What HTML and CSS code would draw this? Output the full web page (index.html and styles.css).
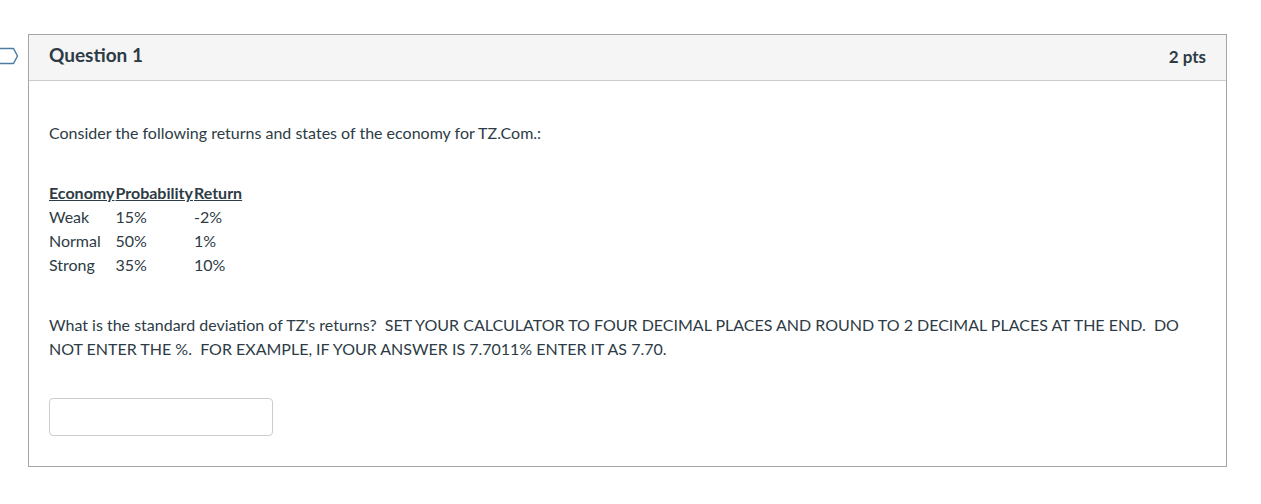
FILE: index.html
```html
<!DOCTYPE html>
<html>
<head>
<meta charset="utf-8">
<link rel="stylesheet" href="styles.css">
</head>
<body>
<div class="page">
  <div class="flag-col">
    <svg class="flag" width="20" height="18" viewBox="0 0 20 18"><path d="M-2 1.5 H13.5 L17.5 9 L13.5 16.5 H-2" fill="none" stroke="#4b7ca3" stroke-width="1.5" stroke-linejoin="round"/></svg>
  </div>
  <div class="card">
    <div class="card-header">
      <h2 class="title">Question 1</h2>
      <span class="pts">2 pts</span>
    </div>
    <div class="card-body">
      <p class="intro">Consider the following returns and states of the economy for TZ.Com.:</p>
      <table class="data">
        <thead>
          <tr><th>Economy</th><th>Probability</th><th>Return</th></tr>
        </thead>
        <tbody>
          <tr><td>Weak</td><td>15%</td><td>-2%</td></tr>
          <tr><td>Normal</td><td>50%</td><td>1%</td></tr>
          <tr><td>Strong</td><td>35%</td><td>10%</td></tr>
        </tbody>
      </table>
      <p class="question">What is the standard deviation of TZ's returns?&nbsp; SET YOUR CALCULATOR TO FOUR DECIMAL PLACES AND ROUND TO 2 DECIMAL PLACES AT THE END.&nbsp; DO NOT ENTER THE %.&nbsp; FOR EXAMPLE, IF YOUR ANSWER IS 7.7011% ENTER IT AS 7.70.</p>
      <input class="answer" type="text">
    </div>
  </div>
</div>
</body>
</html>
```

FILE: styles.css
```css
html, body {
  margin: 0;
  padding: 0;
  background: #fff;
}
body {
  font-family: Lato, "Open Sans", sans-serif;
  color: #2d3b45;
}
.page {
  display: flex;
  align-items: flex-start;
  padding-top: 34px;
}
.flag-col {
  width: 28px;
  flex: none;
  padding-top: 13px;
}
.flag {
  display: block;
}
.card {
  width: 1197px;
  border: 1px solid #a5a5a5;
}
.card-header {
  display: flex;
  justify-content: space-between;
  align-items: flex-start;
  height: 46px;
  box-sizing: border-box;
  background: #f5f5f5;
  border-bottom: 1px solid #c7cdd1;
  padding: 7px 20px 0;
}
.title {
  margin: 0;
  font-size: 19px;
  line-height: 26px;
  font-weight: 700;
}
.pts {
  font-size: 17px;
  line-height: 26px;
  font-weight: 700;
  padding-top: 2px;
}
.card-body {
  padding: 40px 20px 30px;
  font-size: 16px;
  line-height: 24px;
}
.intro {
  margin: 0 0 36px;
}
.data {
  border-collapse: collapse;
}
.data th {
  font-weight: 700;
  text-decoration: underline;
  text-align: left;
  padding: 0 1px 0 0;
}
.data td {
  padding: 0;
  vertical-align: top;
}
.question {
  margin: 36px 0 37px;
}
.answer {
  display: block;
  width: 224px;
  height: 38px;
  box-sizing: border-box;
  border: 1px solid #c7cdd1;
  border-radius: 4px;
  margin: 0;
}
```
